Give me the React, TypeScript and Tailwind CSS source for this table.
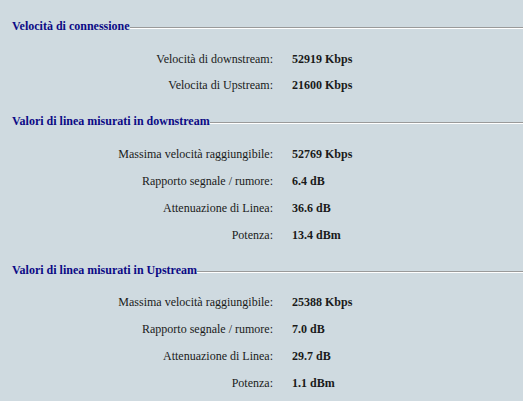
import React from "react";

type Row = [string, string];

function Header({ title }: { title: string }) {
  return (
    <div className="flex items-center h-[16px] pl-[12px]">
      <span className="font-bold text-[12px] text-[#0c0a85] whitespace-nowrap leading-none">{title}</span>
      <div className="flex-1 border-t border-t-[#9a9a9a] border-b border-b-white mt-[3px]" />
    </div>
  );
}

function Rows({ rows, h }: { rows: Row[]; h: string }) {
  return (
    <div className="flex flex-col">
      {rows.map(([l, v]) => (
        <div key={l} className={`flex items-center ${h}`}>
          <div className="w-[273px] text-right text-[12px] text-[#1a1a1a]">{l}</div>
          <div className="pl-[19px] text-[12px] font-bold text-[#1a1a1a]">{v}</div>
        </div>
      ))}
    </div>
  );
}

export default function App() {
  return (
    <div
      className="w-[523px] h-[401px] bg-[#cfdae0] overflow-hidden pt-[18px]"
      style={{ fontFamily: '"Liberation Serif", "Times New Roman", serif' }}
    >
      <Header title="Velocità di connessione" />
      <div className="mt-[12px]">
        <Rows
          h="h-[26px]"
          rows={[
            ["Velocità di downstream:", "52919 Kbps"],
            ["Velocita di Upstream:", "21600 Kbps"],
          ]}
        />
      </div>
      <div className="mt-[15px]">
        <Header title="Valori di linea misurati in downstream" />
      </div>
      <div className="mt-[11px]">
        <Rows
          h="h-[27px]"
          rows={[
            ["Massima velocità raggiungibile:", "52769 Kbps"],
            ["Rapporto segnale / rumore:", "6.4 dB"],
            ["Attenuazione di Linea:", "36.6 dB"],
            ["Potenza:", "13.4 dBm"],
          ]}
        />
      </div>
      <div className="mt-[14px]">
        <Header title="Valori di linea misurati in Upstream" />
      </div>
      <div className="mt-[10px]">
        <Rows
          h="h-[27px]"
          rows={[
            ["Massima velocità raggiungibile:", "25388 Kbps"],
            ["Rapporto segnale / rumore:", "7.0 dB"],
            ["Attenuazione di Linea:", "29.7 dB"],
            ["Potenza:", "1.1 dBm"],
          ]}
        />
      </div>
    </div>
  );
}
